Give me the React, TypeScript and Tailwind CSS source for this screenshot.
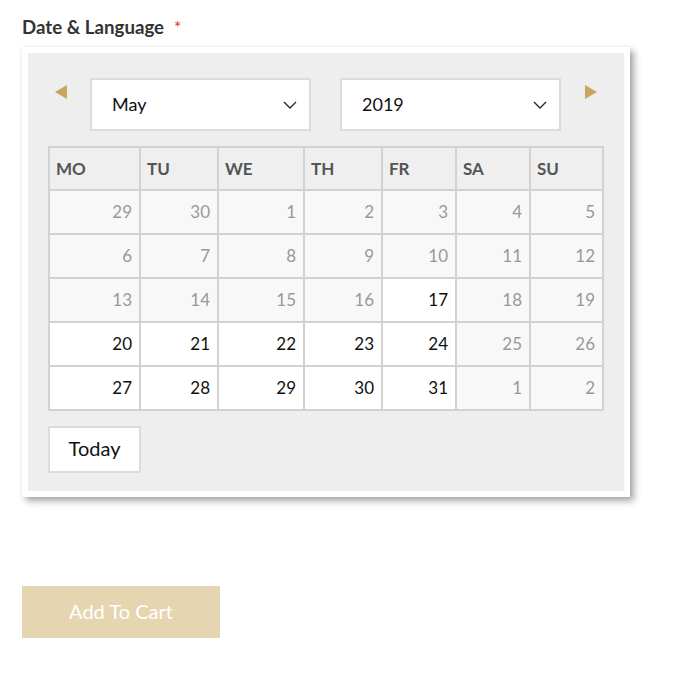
import React from 'react';

type Day = { n: number; cur: boolean };

const cols = ['MO', 'TU', 'WE', 'TH', 'FR', 'SA', 'SU'];

// May 2019, week starting Monday
const weeks: Day[][] = [
    [29, 30, 1, 2, 3, 4, 5].map((n) => ({ n, cur: false })),
    [6, 7, 8, 9, 10, 11, 12].map((n) => ({ n, cur: false })),
    [13, 14, 15, 16, 17, 18, 19].map((n) => ({ n, cur: n === 17 })),
    [20, 21, 22, 23, 24, 25, 26].map((n) => ({ n, cur: n < 25 })),
    [27, 28, 29, 30, 31, 1, 2].map((n) => ({ n, cur: n > 2 })),
];

function Chevron() {
    return (
        <svg width="14" height="8" viewBox="0 0 14 8" fill="none">
            <polyline points="1,1 7,7 13,1" stroke="#2a2a2a" strokeWidth="1.4" />
        </svg>
    );
}

function Select({ value }: { value: string }) {
    return (
        <div className="flex h-[53px] w-[221px] items-center justify-between border-2 border-[#dcdcdc] bg-white pl-5 pr-[12px] text-[18px] text-[#111]">
            <span>{value}</span>
            <Chevron />
        </div>
    );
}

export default function App() {
    return (
        <div className="min-h-screen bg-white pl-[22px] pt-[15px] font-['Lato','Open_Sans',sans-serif]">
            {/* label */}
            <div className="flex h-6 items-start leading-6">
                <span className="text-[18.7px] font-bold text-[#333]">Date &amp; Language</span>
                <span className="ml-[10px] mt-[3px] text-[17px] leading-5 text-[#e02b27]">*</span>
            </div>

            {/* calendar box */}
            <div className="mt-2 w-[608px] bg-white p-[6px] shadow-[4px_4px_7px_rgba(0,0,0,0.35),0_0_3px_rgba(0,0,0,0.08)]">
                <div className="bg-[#eeeeee] pb-[18px] pt-[25px]">
                    <div className="flex items-start pl-[27px]">
                        <svg width="12" height="14" viewBox="0 0 12 14" className="mt-[7px]">
                            <polygon points="12,0 0,7 12,14" fill="#c9a660" />
                        </svg>
                        <div className="ml-[23px]">
                            <Select value="May" />
                        </div>
                        <div className="ml-[29px]">
                            <Select value="2019" />
                        </div>
                        <svg width="12" height="14" viewBox="0 0 12 14" className="ml-6 mt-[7px]">
                            <polygon points="0,0 12,7 0,14" fill="#c9a660" />
                        </svg>
                    </div>

                    <div className="mx-5 mt-[15px] grid grid-cols-[91px_78px_86px_78px_74px_74px_73px] border-l-2 border-t-2 border-[#d2d2d2]">
                        {cols.map((c) => (
                            <div
                                key={c}
                                className="flex h-[43px] items-center border-b-2 border-r-2 border-[#d2d2d2] bg-[#efefef] pl-[6px] text-[17px] font-bold text-[#555]"
                            >
                                {c}
                            </div>
                        ))}
                        {weeks.flat().map((d, i) => (
                            <div
                                key={i}
                                className={
                                    d.cur
                                        ? 'flex h-[44px] items-center justify-end border-b-2 border-r-2 border-[#d2d2d2] bg-white pr-[7px] text-[17px] text-[#111]'
                                        : 'flex h-[44px] items-center justify-end border-b-2 border-r-2 border-[#d2d2d2] bg-[#f8f8f8] pr-[7px] text-[17px] text-[#999]'
                                }
                            >
                                {d.n}
                            </div>
                        ))}
                    </div>

                    <button className="ml-5 mt-[15px] flex h-[47px] w-[93px] items-center justify-center border-2 border-[#dcdcdc] bg-white pb-[3px] text-[20px] text-[#111]">
                        Today
                    </button>
                </div>
            </div>

            <button className="mt-[89px] flex h-[52px] w-[198px] items-center justify-center bg-[#e6d5b1] pb-[3px] text-[20px] text-white">
                Add To Cart
            </button>
        </div>
    );
}
